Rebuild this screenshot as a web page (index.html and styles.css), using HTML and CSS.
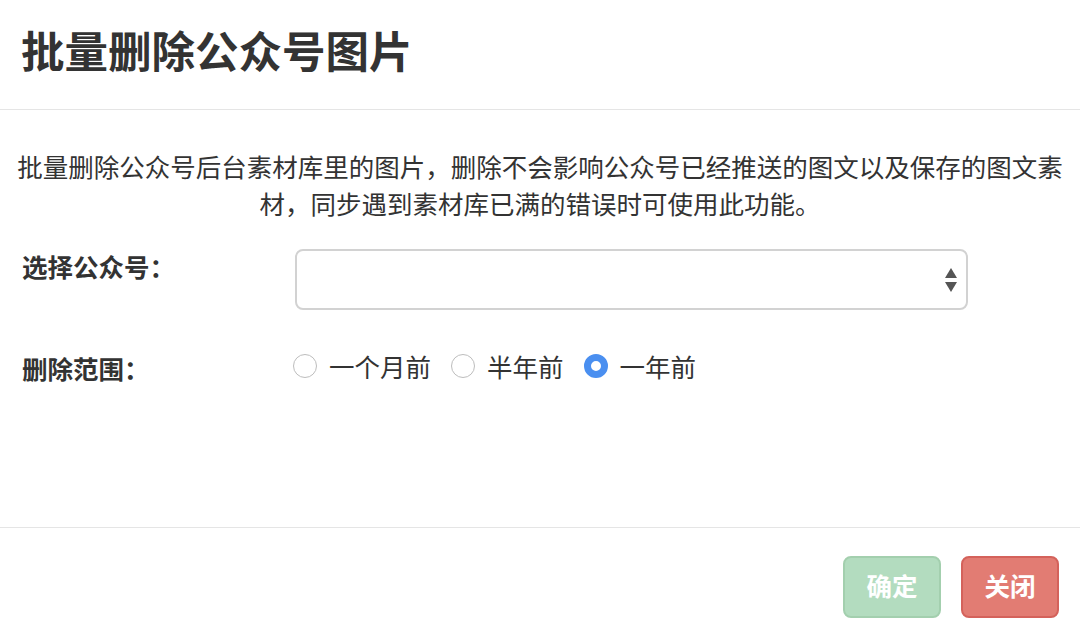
FILE: index.html
```html
<!DOCTYPE html>
<html lang="zh-CN">
<head>
<meta charset="utf-8">
<link rel="stylesheet" href="styles.css">
</head>
<body>
<div class="modal">
  <div class="modal-header">
    <h1 class="modal-title">批量删除公众号图片</h1>
  </div>
  <div class="modal-body">
    <p class="intro">批量删除公众号后台素材库里的图片，删除不会影响公众号已经推送的图文以及保存的图文素材，同步遇到素材库已满的错误时可使用此功能。</p>
    <div class="form-row row-select">
      <label class="control-label">选择公众号：</label>
      <div class="select">
        <span class="arrows">
          <svg width="14" height="24" viewBox="0 0 14 24"><path d="M7 0 L13 10 L1 10 Z" fill="#555"/><path d="M1 14 L13 14 L7 24 Z" fill="#555"/></svg>
        </span>
      </div>
    </div>
    <div class="form-row row-radio">
      <label class="control-label">删除范围：</label>
      <div class="radios">
        <span class="radio"><span class="dot"></span>一个月前</span>
        <span class="radio"><span class="dot"></span>半年前</span>
        <span class="radio"><span class="dot checked"></span>一年前</span>
      </div>
    </div>
  </div>
  <div class="modal-footer">
    <button class="btn btn-ok">确定</button>
    <button class="btn btn-close">关闭</button>
  </div>
</div>
</body>
</html>
```
FILE: styles.css
```css
html, body {
  margin: 0;
  padding: 0;
  background: #fff;
}
body {
  font-family: "Noto Sans CJK SC", "Noto Sans", "Liberation Sans", sans-serif;
  color: #333;
}
.modal {
  width: 1080px;
  height: 634px;
  overflow: hidden;
}
.modal-header {
  height: 110px;
  box-sizing: border-box;
  border-bottom: 1px solid #e5e5e5;
  display: flex;
  align-items: center;
  padding: 0 0 10px 21px;
}
.modal-title {
  margin: 0;
  font-size: 43.5px;
  font-weight: 700;
  line-height: 48px;
  color: #333;
}
.modal-body {
  height: 417px;
  box-sizing: border-box;
  padding: 37px 0 0 0;
}
.intro {
  margin: 0;
  padding: 0 12px;
  text-align: center;
  font-size: 25.5px;
  line-height: 37px;
}
.form-row {
  display: flex;
  align-items: flex-start;
  padding-left: 22px;
}
.row-select {
  margin-top: 28px;
}
.row-radio {
  margin-top: 39px;
}
.control-label {
  width: 273px;
  flex: none;
  font-size: 25.5px;
  font-weight: 700;
  line-height: 37px;
}
.row-select .control-label {
  margin-top: -2px;
}
.select {
  width: 673px;
  height: 61px;
  box-sizing: border-box;
  border: 2px solid #d2d2d2;
  border-radius: 8px;
  display: flex;
  align-items: center;
  justify-content: flex-end;
  padding-right: 8px;
}
.arrows {
  display: flex;
}
.radios {
  display: flex;
  align-items: center;
  gap: 20px;
  font-size: 25.5px;
  line-height: 37px;
  margin-left: -2px;
  margin-top: -2px;
}
.radio {
  display: flex;
  align-items: center;
  gap: 12px;
}
.dot {
  width: 24px;
  height: 24px;
  box-sizing: border-box;
  border-radius: 50%;
  border: 1.5px solid #bdbdbd;
  background: #fff;
  flex: none;
}
.dot.checked {
  border: 7px solid #4a8ff0;
  background: #fff;
}
.modal-footer {
  border-top: 1px solid #e5e5e5;
  display: flex;
  justify-content: flex-end;
  gap: 20px;
  padding: 28px 21px 0 0;
}
.btn {
  width: 98px;
  height: 62px;
  border-radius: 8px;
  font-family: inherit;
  font-size: 25.5px;
  font-weight: 700;
  line-height: 1;
  color: #fff;
  padding: 0 0 4px 0;
  cursor: pointer;
}
.btn-ok {
  background: #b3dcbf;
  border: 2px solid #a3cfae;
}
.btn-close {
  background: #e27c73;
  border: 2px solid #d4625b;
}
```
